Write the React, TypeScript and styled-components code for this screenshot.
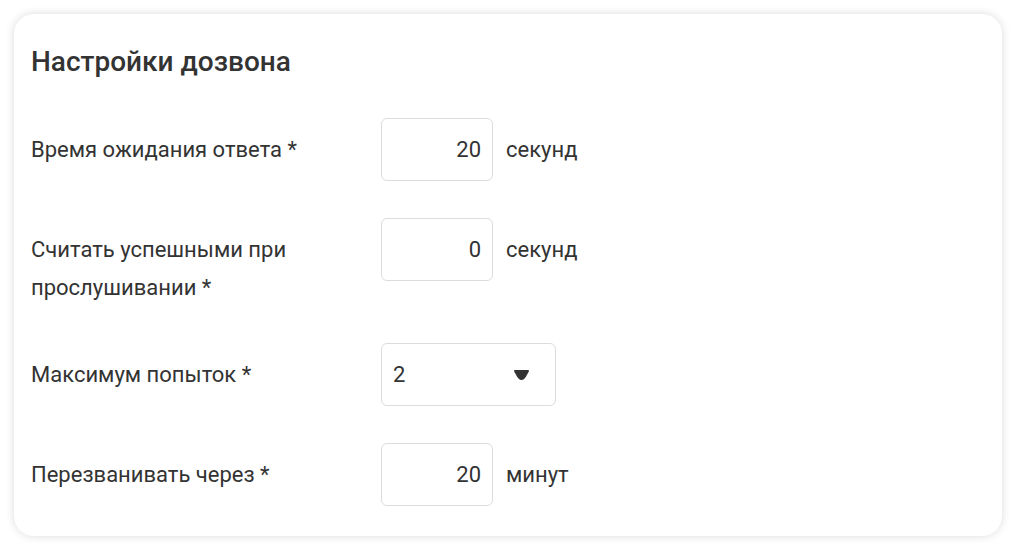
import React from "react";
import styled, { createGlobalStyle } from "styled-components";

const GlobalStyle = createGlobalStyle`
  html, body {
    margin: 0;
    padding: 0;
    background: #ffffff;
    font-family: Roboto, "Liberation Sans", sans-serif;
    color: #333333;
  }
`;

type Field = {
  label: string;
  value: string;
  unit?: string;
  select?: boolean;
};

const fields: Field[] = [
  { label: "Время ожидания ответа *", value: "20", unit: "секунд" },
  { label: "Считать успешными при прослушивании *", value: "0", unit: "секунд" },
  { label: "Максимум попыток *", value: "2", select: true },
  { label: "Перезванивать через *", value: "20", unit: "минут" },
];

const Page = () => {
  return (
    <>
      <GlobalStyle />
      <Wrap>
        <Card>
          <Title>Настройки дозвона</Title>
          <Form>
            {fields.map((f) => (
              <Row key={f.label}>
                <Label>{f.label}</Label>
                <Control>
                  {f.select ? (
                    <Select>
                      <span>{f.value}</span>
                      <Caret viewBox="0 0 15 10">
                        <path d="M0 0.8 Q0 0 0.9 0 H14.1 Q15 0 15 0.8 Q15 1.8 13.4 4 Q10.6 10 7.5 10 Q4.4 10 1.6 4 Q0 1.8 0 0.8 Z" />
                      </Caret>
                    </Select>
                  ) : (
                    <NumberBox>{f.value}</NumberBox>
                  )}
                  {f.unit && <Unit>{f.unit}</Unit>}
                </Control>
              </Row>
            ))}
          </Form>
        </Card>
      </Wrap>
    </>
  );
};

export default Page;

const Wrap = styled.div`
  padding: 14px;
  width: 1016px;
  height: 550px;
  box-sizing: border-box;
`;

const Card = styled.div`
  background: #ffffff;
  border-radius: 20px;
  box-shadow: 0 0 10px rgba(0, 0, 0, 0.14);
  padding: 30px 17px 30px;
  height: 522px;
  box-sizing: border-box;
`;

const Title = styled.h2`
  margin: 0;
  font-size: 28px;
  line-height: 36px;
  font-weight: 500;
  color: #333333;
`;

const Form = styled.div`
  display: flex;
  flex-direction: column;
  gap: 37px;
  margin-top: 38px;
`;

const Row = styled.div`
  display: flex;
  align-items: flex-start;
`;

const Label = styled.div`
  width: 350px;
  padding-top: 13px;
  padding-right: 50px;
  box-sizing: border-box;
  font-size: 22px;
  line-height: 37.5px;
  color: #333333;
`;

const Control = styled.div`
  display: flex;
  align-items: center;
  gap: 13px;
`;

const NumberBox = styled.div`
  width: 112px;
  height: 63px;
  box-sizing: border-box;
  border: 1px solid #dcdcdc;
  border-radius: 6px;
  padding: 0 11px;
  display: flex;
  align-items: center;
  justify-content: flex-end;
  font-size: 22px;
  color: #333333;
`;

const Select = styled.div`
  width: 175px;
  height: 63px;
  box-sizing: border-box;
  border: 1px solid #dcdcdc;
  border-radius: 6px;
  padding: 0 26px 0 11px;
  display: flex;
  align-items: center;
  justify-content: space-between;
  font-size: 22px;
  color: #333333;
`;

const Caret = styled.svg`
  width: 15px;
  height: 10px;
  fill: #333333;
`;

const Unit = styled.span`
  font-size: 22px;
  color: #333333;
`;
